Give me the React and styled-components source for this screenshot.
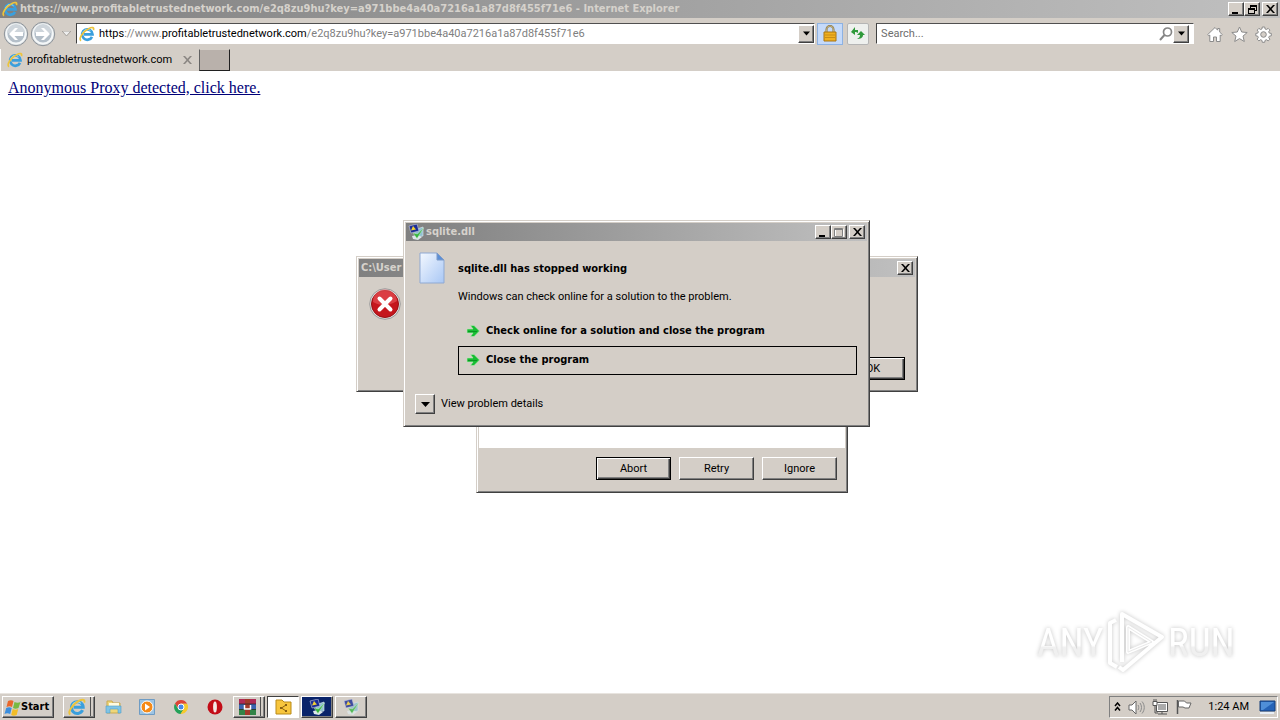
import React from 'react';
import styled, { createGlobalStyle, css } from 'styled-components';

const boldFont = '"DejaVu Sans Condensed", "DejaVu Sans", sans-serif';

const GlobalStyle = createGlobalStyle`
  * { box-sizing: border-box; }
  body {
    margin: 0;
    background: #fff;
    color: #000;
    font: 11px/14px Roboto, "Noto Sans", sans-serif;
  }
  button, input {
    font: inherit;
    color: inherit;
    border-radius: 0;
    margin: 0;
  }
  svg { display: block; flex: none; }
`;

const raised = css`
  border: 1px solid;
  border-color: #fff #404040 #404040 #fff;
  box-shadow: inset -1px -1px #808080;
  background: #d4cec7;
`;

const Desktop = styled.div`
  position: relative;
  display: flex;
  flex-direction: column;
  height: 100vh;
  overflow: hidden;
`;

const TitleBar = styled.header`
  display: flex;
  align-items: center;
  gap: 2px;
  height: 18px;
  padding: 0 2px;
  background: linear-gradient(90deg, #808080, #c0c0c0);
  color: #d6d2cc;
  font-family: ${boldFont};
  font-weight: bold;
  white-space: nowrap;
  span { flex: 1; }
`;

const Caption = styled.div`
  display: flex;
  button + button:last-child { margin-left: 2px; }
`;

const CaptionButton = styled.button`
  ${raised}
  display: flex;
  align-items: center;
  justify-content: center;
  width: 16px;
  height: 14px;
  padding: 0;
`;

const NavBar = styled.nav`
  display: flex;
  align-items: center;
  height: 31px;
  padding: 0 5px 0 2px;
  background: #d4cec7;
`;

const PlainButton = styled.button`
  display: flex;
  align-items: center;
  justify-content: center;
  width: ${props => props.$width || 24}px;
  height: 24px;
  padding: 0;
  border: 0;
  background: none;
`;

const SecureButton = styled(PlainButton)`
  height: 22px;
  margin-left: 2px;
  border: 1px solid #8db2e3;
  background: #c5dafa;
`;

const RefreshButton = styled(PlainButton)`
  height: 22px;
  margin: 0 7px 0 4px;
  border: 1px solid #b5b5b5;
  border-radius: 2px;
  background: #eef0ee;
`;

const Field = styled.div`
  display: flex;
  align-items: center;
  flex: ${props => props.$grow};
  min-width: 0;
  height: 21px;
  padding: 0 0 0 2px;
  border: 1px solid;
  border-color: #505050 #fff #fff #404040;
  background: #fff;
  overflow: hidden;
`;

const Address = styled.a`
  flex: 1;
  margin-left: 4px;
  color: #808080;
  text-decoration: none;
  white-space: nowrap;
  b { color: #000; font-weight: normal; }
`;

const SearchInput = styled.input`
  flex: 1;
  min-width: 0;
  padding: 0 2px;
  border: 0;
  outline: 0;
  background: none;
  &::placeholder { color: #6d6d6d; opacity: 1; }
`;

const DropButton = styled.button`
  ${raised}
  display: flex;
  align-items: center;
  justify-content: center;
  width: ${props => props.$size || 16}px;
  height: ${props => props.$size || 18}px;
  margin-right: ${props => props.$gap || 0}px;
  padding: 0;
`;

const Tools = styled.div`
  display: flex;
  margin-left: 9px;
  padding-top: 2px;
`;

const TabRow = styled.div`
  display: flex;
  height: 22px;
  background: #d4cec7;
`;

const Tab = styled.div`
  display: flex;
  align-items: center;
  gap: 4px;
  width: 199px;
  padding: 0 4px 0 6px;
  border-left: 1px solid #fff;
  span { flex: 1; }
`;

const NewTab = styled.button`
  width: 31px;
  height: 22px;
  border: 1px solid;
  border-color: #d4cec7 #202020 #202020 #606060;
  background: #b9b1ab;
`;

const Page = styled.main`
  flex: 1;
  padding: 7px 8px;
  font: 16px/20px "Liberation Serif", serif;
  a { color: #000078; }
`;

const Win = styled.section`
  position: absolute;
  left: ${props => props.$left}px;
  top: ${props => props.$top}px;
  display: flex;
  flex-direction: column;
  width: ${props => props.$width}px;
  height: ${props => props.$height}px;
  padding: 2px;
  border: 1px solid;
  border-color: #d4cec7 #404040 #404040 #d4cec7;
  box-shadow: inset 1px 1px #fff, inset -1px -1px #808080;
  background: #d4cec7;
`;

const ErrorBody = styled.div`
  display: flex;
  flex: 1;
  flex-direction: column;
  justify-content: space-between;
  padding: 11px 10px 9px;
`;

const Blank = styled.div`
  flex: 1;
  background: #fff;
`;

const Actions = styled.div`
  display: flex;
  justify-content: flex-end;
  gap: 8px;
  padding: ${props => props.$pad || '0'};
`;

const Button = styled.button`
  ${raised}
  width: ${props => props.$width || 75}px;
  height: 23px;
  padding: 0;
  ${props => props.$default && css`
    border-color: #000;
    box-shadow: inset 1px 1px #fff, inset -1px -1px #404040, inset -2px -2px #808080;
  `}
`;

const CrashBody = styled.div`
  display: grid;
  grid-template-columns: 39px 1fr;
  padding: 11px 10px 0 13px;
`;

const Message = styled.div`
  h1 {
    margin: 0;
    padding-top: 10px;
    font: inherit;
    font-family: ${boldFont};
    font-weight: bold;
  }
  p { margin: 14px 0 13px; }
`;

const Command = styled.button`
  display: flex;
  align-items: center;
  gap: 6px;
  width: 100%;
  height: 29px;
  padding: 0 7px 1px;
  border: 1px solid ${props => (props.$focused ? '#000' : 'transparent')};
  background: none;
  font-family: ${boldFont};
  font-weight: bold;
`;

const Details = styled.label`
  display: flex;
  align-items: center;
  gap: 6px;
  padding: 19px 9px 0;
`;

const Watermark = styled.div`
  position: absolute;
  right: 44px;
  bottom: 46px;
  filter: drop-shadow(0 0 2px #c4c4c4);
`;

const TaskBar = styled.footer`
  display: flex;
  align-items: center;
  gap: 2px;
  height: 27px;
  padding: 2px;
  border-top: 1px solid #e8e4df;
  background: #d4cec7;
`;

const StartButton = styled.button`
  ${raised}
  display: flex;
  align-items: center;
  width: 52px;
  height: 22px;
  margin-right: 7px;
  padding: 0 1px;
  font-family: ${boldFont};
  font-weight: bold;
`;

const TaskButton = styled.button`
  display: flex;
  align-items: center;
  justify-content: center;
  width: 32px;
  height: 22px;
  padding: 0;
  border: 1px solid transparent;
  background: none;
  ${props => props.$open && raised}
  ${props => props.$stacked && css`
    padding-right: 4px;
    box-shadow: inset -1px -1px #808080, inset -3px 0 #d4cec7, inset -4px 0 #505050;
  `}
  ${props => props.$active && css`background: #fff; border-color: #404040 #fff #fff #404040; box-shadow: none;`}
  ${props => props.$flash && css`background: #0a246a;`}
`;

const Tray = styled.div`
  display: flex;
  align-items: center;
  gap: 7px;
  height: 22px;
  margin-left: auto;
  padding: 0 1px 0 4px;
  border: 1px solid;
  border-color: #808080 #fff #fff #808080;
  time { margin: 0 3px 0 9px; }
`;

const IeIcon = ({ size = 16 }) => (
  <svg width={size} height={size} viewBox="0 0 16 16" fill="none">
    <path d="M13 10.800A5.200 5.200 0 1 1 13.500 8.300H5" stroke="#3a9fdd" strokeWidth="2.700" />
    <path d="M3.700 7A4.700 4.700 0 0 1 11.500 4.800" stroke="#a5e3fa" strokeWidth="1" />
    <path d="M2 14.700C-.6 13 3.700 5.400 10 2.400c3.400-1.700 5.300-.9 4.400 1.700" stroke="#edc43c" strokeWidth="1.700" />
  </svg>
);

const NavArrow = ({ back }) => (
  <svg width="26" height="26" viewBox="0 0 26 26">
    <circle cx="13" cy="13" r="11.700" fill="#d5dadd" stroke="#8d9399" />
    <circle cx="13" cy="13" r="9.600" fill="#b4bfc9" stroke="#f4f7f8" strokeWidth="2" />
    <path d="M4 12a9 9 0 0 1 18 0z" fill="#ced5db" />
    <path d={back ? 'M6 13l6-6h3l-3.600 4H20v4h-8.600l3.600 4h-3z' : 'M20 13l-6-6h-3l3.600 4H6v4h8.600L11 19h3z'} fill="#fff" />
  </svg>
);

const Down = ({ muted, width = 7 }) => (
  <svg width={width} height="5" viewBox="0 0 9 5">
    <path d="M0 0h9L4.500 5z" fill={muted ? '#eee' : '#000'} stroke={muted ? '#a5a19c' : 'none'} />
  </svg>
);

const CloseGlyph = ({ color = '#000' }) => (
  <svg width="9" height="8" viewBox="0 0 9 8">
    <path d="M0 0h2l2.500 2.700L7 0h2L5.500 4 9 8H7L4.500 5.300 2 8H0l3.500-4z" fill={color} />
  </svg>
);

const MinGlyph = () => (
  <svg width="10" height="9" viewBox="0 0 10 9"><path d="M1 7h6v2H1z" /></svg>
);

const MaxGlyph = () => (
  <svg width="10" height="9" viewBox="0 0 10 9" fill="none">
    <path d="M1.500 1.500h8v7h-8z" stroke="#fff" />
    <path d="M.5.5h8v8h-8zM1 1.500h7.500" stroke="#808080" />
  </svg>
);

const RestoreGlyph = () => (
  <svg width="9" height="9" viewBox="0 0 9 9" shapeRendering="crispEdges">
    <path d="M2 0h7v6H7V5h1V2H3v1H2zM0 3h7v6H0zm1 2v3h5V5z" fillRule="evenodd" />
  </svg>
);

const LockIcon = () => (
  <svg width="14" height="17" viewBox="0 0 14 17">
    <path d="M3.500 8V4.500a3.500 3.500 0 0 1 7 0V8" fill="none" stroke="#8a7440" strokeWidth="2" />
    <path d="M3.500 8V4.500a3.500 3.500 0 0 1 7 0V8" fill="none" stroke="#d6ca9c" strokeWidth=".7" />
    <path d="M1 7h12v9H1z" fill="#f0b020" stroke="#a87512" />
    <path d="M2 10h10M2 12.500h10" stroke="#c98d15" />
  </svg>
);

const RefreshIcon = () => (
  <svg width="16" height="14" viewBox="0 0 16 14" fill="#2f9a3b">
    <path d="M1 5l4-5v3h3v3c-1-1-2-1-3-1v3z" />
    <path d="M15 8l-4-4-4 4h3c0 2-1 3-3 4 3 0 6-1 6-4z" />
  </svg>
);

const SearchIcon = () => (
  <svg width="14" height="14" viewBox="0 0 14 14" fill="none" stroke="#858585">
    <circle cx="8.500" cy="5" r="4" strokeWidth="1.700" /><path d="M5.500 8L1 13" strokeWidth="2" />
  </svg>
);

const outline = { fill: '#fff', stroke: '#8b8b8b', strokeWidth: 1, strokeLinejoin: 'round' };

const HomeIcon = () => (
  <svg width="16" height="17" viewBox="0 0 16 17" {...outline}>
    <path d="M8 1.500L.7 8.600l1.200 1.200.9-.8v6.500h3.700V11h3v4.500h3.700V9l.9.8 1.200-1.200-2.600-2.500V2.500h-2v1.700z" />
  </svg>
);

const StarIcon = () => (
  <svg width="17" height="17" viewBox="0 0 17 17" {...outline}>
    <path d="M8.500 1l2.200 5 5.500.5-4.200 3.600 1.300 5.400-4.800-2.900-4.800 2.900L5 10.100.8 6.500 6.300 6z" />
  </svg>
);

const GearIcon = () => (
  <svg width="17" height="17" viewBox="0 0 17 17" {...outline}>
    <path d="M7.300 1h2.400l.4 2 1.300.5L13.200 2.400l1.700 1.700-1.200 1.700.6 1.300 2 .3v2.400l-2 .4-.6 1.300 1.200 1.700-1.700 1.700-1.800-1.200-1.300.6-.4 2H7.300l-.4-2-1.300-.6-1.700 1.200-1.700-1.700 1.100-1.700-.5-1.300-2-.4V7.400l2-.3.5-1.300-1.100-1.700 1.700-1.700 1.700 1.100L6.900 3z" />
    <circle cx="8.500" cy="8.500" r="2.800" fill="#d4cec7" />
  </svg>
);

const AppIcon = ({ size = 16, pale }) => (
  <svg width={size} height={size} viewBox="0 0 16 16" opacity={pale ? 0.8 : 1}>
    <path d="M6 6l9-3v9l-7 1z" fill="#8fc0d0" stroke="#dfeaf0" strokeWidth=".6" />
    <path d="M1 2l8-2 2 7-8 2z" fill="#1b2c96" stroke="#c8cce0" strokeWidth=".6" />
    <path d="M3 6.500L5 2l3 3.500z" fill="#f1cf35" />
    <path d="M4 12l5-1 5 2-4 3-5-1z" fill="#dde7ea" />
    <path d="M5 9l4 5.500L16 3.500 9.500 10z" fill="#36b53f" stroke="#d9f2d5" strokeWidth=".4" />
  </svg>
);

const ErrorIcon = () => (
  <svg width="32" height="32" viewBox="0 0 32 32">
    <circle cx="16" cy="16" r="15.300" fill="#dedede" stroke="#9b9b9b" />
    <circle cx="16" cy="16" r="13.500" fill="#c5161d" stroke="#981014" />
    <path d="M4 14a12 12 0 0 1 24-1C20 18 11 18 4 14z" fill="#e65358" opacity=".65" />
    <path d="M10.500 10.500l11 11m0-11l-11 11" stroke="#fff" strokeWidth="4" strokeLinecap="round" />
  </svg>
);

const FileIcon = () => (
  <svg width="26" height="32" viewBox="0 0 26 32">
    <defs>
      <linearGradient id="sheet" x1="0" y1="0" x2="1" y2="1">
        <stop offset="0" stopColor="#f3f8ff" /><stop offset="1" stopColor="#a9c7f4" />
      </linearGradient>
    </defs>
    <path d="M1 1h17l7 7v23H1z" fill="url(#sheet)" stroke="#8fa9d3" />
    <path d="M18 1v7h7z" fill="#5c8fd6" stroke="#7f9bc8" />
  </svg>
);

const GreenArrow = () => (
  <svg width="14" height="14" viewBox="0 0 14 14">
    <path d="M1 5h6L4.500 1.500H8L13.500 7 8 12.500H4.500L7 9H1z" fill="#16bd32" stroke="#b8e6b5" strokeWidth=".6" />
    <path d="M2 7.500h9" stroke="#0a9423" />
  </svg>
);

const StartFlag = () => (
  <svg width="17" height="17" viewBox="0 0 17 17">
    <path d="M4 2c2-1 4-1 5.500 0L8 8c-2-1-3-1-5.500 0z" fill="#e9672b" />
    <path d="M10.500 3c2 1 4 1 6 0l-2 6c-2 1-4 1-5.500 0z" fill="#78b942" />
    <path d="M2.200 9c2-1 4-1 5.500 0l-1.500 6c-2-1-4-1-5.700 0z" fill="#3b8ede" />
    <path d="M8.700 10c2 1 4 1 5.500 0l-1.500 6c-2 1-4 1-5.500 0z" fill="#f2bd27" />
  </svg>
);

const FolderIcon = () => (
  <svg width="17" height="16" viewBox="0 0 17 16">
    <path d="M2 2h5l1 2h7v10H2z" fill="#efd779" stroke="#c9a950" />
    <path d="M4 4h10v6H4z" fill="#fffbe0" />
    <path d="M1 7h15v7h-3v-4H5v4H1z" fill="#7fc4e5" stroke="#4f9ec9" strokeWidth=".6" />
  </svg>
);

const PlayerIcon = () => (
  <svg width="16" height="16" viewBox="0 0 16 16">
    <path d="M.5.5h15v15H.5z" fill="#9cc4e4" stroke="#6f9cc4" />
    <circle cx="8" cy="8" r="6" fill="#f58a18" stroke="#fff" />
    <path d="M6 4.500l5 3.500-5 3.500z" fill="#fff" />
  </svg>
);

const ChromeIcon = () => (
  <svg width="14" height="14" viewBox="0 0 14 14">
    <path d="M1 3.500a7 7 0 0 1 12.200.3H7L4.200 8.700z" fill="#dd4436" />
    <path d="M1 3.500A7 7 0 0 0 6.600 14l3.100-4.300-5.400-.5z" fill="#24a159" />
    <path d="M13.200 3.800A7 7 0 0 1 6.600 14l3.200-5.500L7 3.800z" fill="#f6ca2c" />
    <circle cx="7" cy="7" r="3" fill="#4688e8" stroke="#fff" />
  </svg>
);

const OperaIcon = () => (
  <svg width="16" height="16" viewBox="0 0 16 16">
    <ellipse cx="8" cy="8" rx="7.500" ry="7.500" fill="#c30c17" />
    <ellipse cx="8" cy="8" rx="1.900" ry="5.500" fill="#f4e7e4" />
  </svg>
);

const RarIcon = () => (
  <svg width="17" height="16" viewBox="0 0 17 16">
    <path d="M0 0h17v5H0z" fill="#b02a55" /><path d="M0 5h17v5H0z" fill="#3b63ae" />
    <path d="M0 10h17v6H0z" fill="#338447" /><path d="M6 0h5v16H6z" fill="#a3392a" />
    <path d="M0 5h17M0 10.500h17" stroke="#222" strokeWidth=".7" />
    <path d="M5.500 6v4h6V6" fill="none" stroke="#fff" strokeWidth="1.500" />
  </svg>
);

const ShareFolder = () => (
  <svg width="17" height="16" viewBox="0 0 17 16">
    <path d="M1 1h6l2 2h7v12H1z" fill="#f8c63d" stroke="#b98a18" />
    <path d="M11 6L6.500 9l4.500 3" fill="none" stroke="#8a6110" />
    <path d="M10 5h2v2h-2zM5 8h2v2H5zM10 11h2v2h-2z" fill="#8a6110" />
  </svg>
);

const Chevron = () => (
  <svg width="7" height="10" viewBox="0 0 7 10" fill="none" stroke="#000" strokeWidth="1.500">
    <path d="M1 4l2.500-3L6 4M1 8.500l2.500-3 2.500 3" />
  </svg>
);

const SpeakerIcon = () => (
  <svg width="17" height="15" viewBox="0 0 17 15" {...outline}>
    <path d="M1 5h3l4-4v13l-4-4H1z" stroke="#666" />
    <path d="M10 5c1 1.500 1 3.500 0 5M12 3c2 2.500 2 6.500 0 9M14 1.500c3 3.500 3 8.500 0 12" fill="none" />
  </svg>
);

const NetworkIcon = () => (
  <svg width="17" height="16" viewBox="0 0 17 16" fill="#fff" stroke="#555">
    <path d="M4.500 3.500h11v9h-11z" /><path d="M6 5h8v6H6z" fill="#aaa" stroke="none" />
    <path d="M10 13v2M6 15h9M3 7v7h3" fill="none" />
    <path d="M1 2.500h4v4H1zM2 0v2m2-2v2" />
  </svg>
);

const FlagIcon = () => (
  <svg width="16" height="16" viewBox="0 0 16 16" {...outline}>
    <path d="M1.500 1v14" stroke="#555" strokeWidth="1.500" />
    <path d="M2.500 2h6l2 2h4.500l-2 5H9L7 8H2.500z" stroke="#666" />
  </svg>
);

const ShowDesktop = () => (
  <svg width="17" height="14" viewBox="0 0 17 14">
    <path d="M1 1h15v10H1z" fill="#2563b7" stroke="#173e78" />
    <path d="M2 2h13L4 10H2z" fill="#4f8fd8" /><path d="M1 13h14" stroke="#e8eef5" strokeWidth="2" />
  </svg>
);

const RunLogo = () => (
  <svg width="200" height="64" viewBox="0 0 200 64" fill="none" stroke="#fff">
    <defs>
      <linearGradient id="fade" x1="0" y1="0" x2="0" y2="1">
        <stop offset=".55" stopColor="#fff" /><stop offset=".6" stopColor="#f0f0f0" />
      </linearGradient>
    </defs>
    <path d="M80 10l-6 3v40l7 4M86 52V4l40 23-39 33-4-3M92 42V17l24 15z" strokeWidth="4" strokeLinejoin="round" />
    <path d="M92 42V17l24 15z" stroke="#e9e9e9" />
    <g fill="url(#fade)" stroke="none" fontFamily='"Roboto Condensed", "Liberation Sans Narrow", Roboto, sans-serif' fontSize="39">
      <text x="1" y="46">ANY</text>
      <text x="132" y="46">RUN</text>
    </g>
  </svg>
);

const WindowCaption = ({ withSizing, restore }) => (
  <Caption>
    {withSizing && (
      <>
        <CaptionButton aria-label="Minimize"><MinGlyph /></CaptionButton>
        <CaptionButton aria-label="Maximize">{restore ? <RestoreGlyph /> : <MaxGlyph />}</CaptionButton>
      </>
    )}
    <CaptionButton aria-label="Close"><CloseGlyph /></CaptionButton>
  </Caption>
);

const tasks = [
  { name: 'Internet Explorer', icon: <IeIcon size={18} />, open: true, stacked: true },
  { name: 'Explorer', icon: <FolderIcon /> },
  { name: 'Media Player', icon: <PlayerIcon /> },
  { name: 'Chrome', icon: <ChromeIcon /> },
  { name: 'Opera', icon: <OperaIcon /> },
  { name: 'WinRAR', icon: <RarIcon />, open: true, stacked: true },
  { name: 'Shared folder', icon: <ShareFolder />, open: true, active: true },
  { name: 'sqlite.dll', icon: <AppIcon />, open: true, flash: true },
  { name: 'Problem report', icon: <AppIcon pale />, open: true },
];

const App = () => (
  <>
    <GlobalStyle />
    <Desktop>
      <TitleBar>
        <IeIcon />
        <span>https://www.profitabletrustednetwork.com/e2q8zu9hu?key=a971bbe4a40a7216a1a87d8f455f71e6 - Internet Explorer</span>
        <WindowCaption withSizing restore />
      </TitleBar>
      <NavBar>
        <PlainButton $width={27} aria-label="Back"><NavArrow back /></PlainButton>
        <PlainButton $width={27} aria-label="Forward"><NavArrow /></PlainButton>
        <PlainButton $width={20} aria-label="Recent pages"><Down muted width={9} /></PlainButton>
        <Field $grow="740 1 0">
          <IeIcon />
          <Address href="#"><b>https</b>://www.<b>profitabletrustednetwork.com</b>/e2q8zu9hu?key=a971bbe4a40a7216a1a87d8f455f71e6</Address>
          <DropButton aria-label="Show address history"><Down /></DropButton>
        </Field>
        <SecureButton $width={26} aria-label="Security report"><LockIcon /></SecureButton>
        <RefreshButton $width={22} aria-label="Refresh"><RefreshIcon /></RefreshButton>
        <Field $grow="316 1 0">
          <SearchInput placeholder="Search..." aria-label="Search" />
          <SearchIcon />
          <DropButton $gap={4} aria-label="Search options"><Down /></DropButton>
        </Field>
        <Tools>
          <PlainButton aria-label="Home"><HomeIcon /></PlainButton>
          <PlainButton aria-label="Favorites"><StarIcon /></PlainButton>
          <PlainButton aria-label="Tools"><GearIcon /></PlainButton>
        </Tools>
      </NavBar>
      <TabRow>
        <Tab>
          <IeIcon />
          <span>profitabletrustednetwork.com</span>
          <PlainButton $width={16} aria-label="Close tab"><CloseGlyph color="#8a8682" /></PlainButton>
        </Tab>
        <NewTab aria-label="New tab" />
      </TabRow>
      <Page><a href="#">Anonymous Proxy detected, click here.</a></Page>

      <Win $left={476} $top={300} $width={372} $height={193}>
        <Blank />
        <Actions $pad="9px 8px 10px"><Button $default>Abort</Button><Button>Retry</Button><Button>Ignore</Button></Actions>
      </Win>
      <Win $left={356} $top={256} $width={562} $height={136}>
        <TitleBar><span>C:\User</span><WindowCaption /></TitleBar>
        <ErrorBody>
          <ErrorIcon />
          <Actions><Button $default $width={64}>OK</Button></Actions>
        </ErrorBody>
      </Win>
      <Win $left={403} $top={220} $width={467} $height={207}>
        <TitleBar><AppIcon /><span>sqlite.dll</span><WindowCaption withSizing /></TitleBar>
        <CrashBody>
          <FileIcon />
          <Message>
            <h1>sqlite.dll has stopped working</h1>
            <p>Windows can check online for a solution to the problem.</p>
            <Command><GreenArrow />Check online for a solution and close the program</Command>
            <Command $focused><GreenArrow />Close the program</Command>
          </Message>
        </CrashBody>
        <Details><DropButton $size={20} aria-label="View problem details"><Down width={9} /></DropButton>View problem details</Details>
      </Win>

      <Watermark role="img" aria-label="ANY RUN"><RunLogo /></Watermark>
      <TaskBar>
        <StartButton><StartFlag />Start</StartButton>
        {tasks.map(task => (
          <TaskButton
            key={task.name}
            aria-label={task.name}
            $open={task.open}
            $stacked={task.stacked}
            $active={task.active}
            $flash={task.flash}
          >
            {task.icon}
          </TaskButton>
        ))}
        <Tray>
          <Chevron /><SpeakerIcon /><NetworkIcon /><FlagIcon />
          <time>1:24 AM</time>
          <ShowDesktop />
        </Tray>
      </TaskBar>
    </Desktop>
  </>
);

export default App;
